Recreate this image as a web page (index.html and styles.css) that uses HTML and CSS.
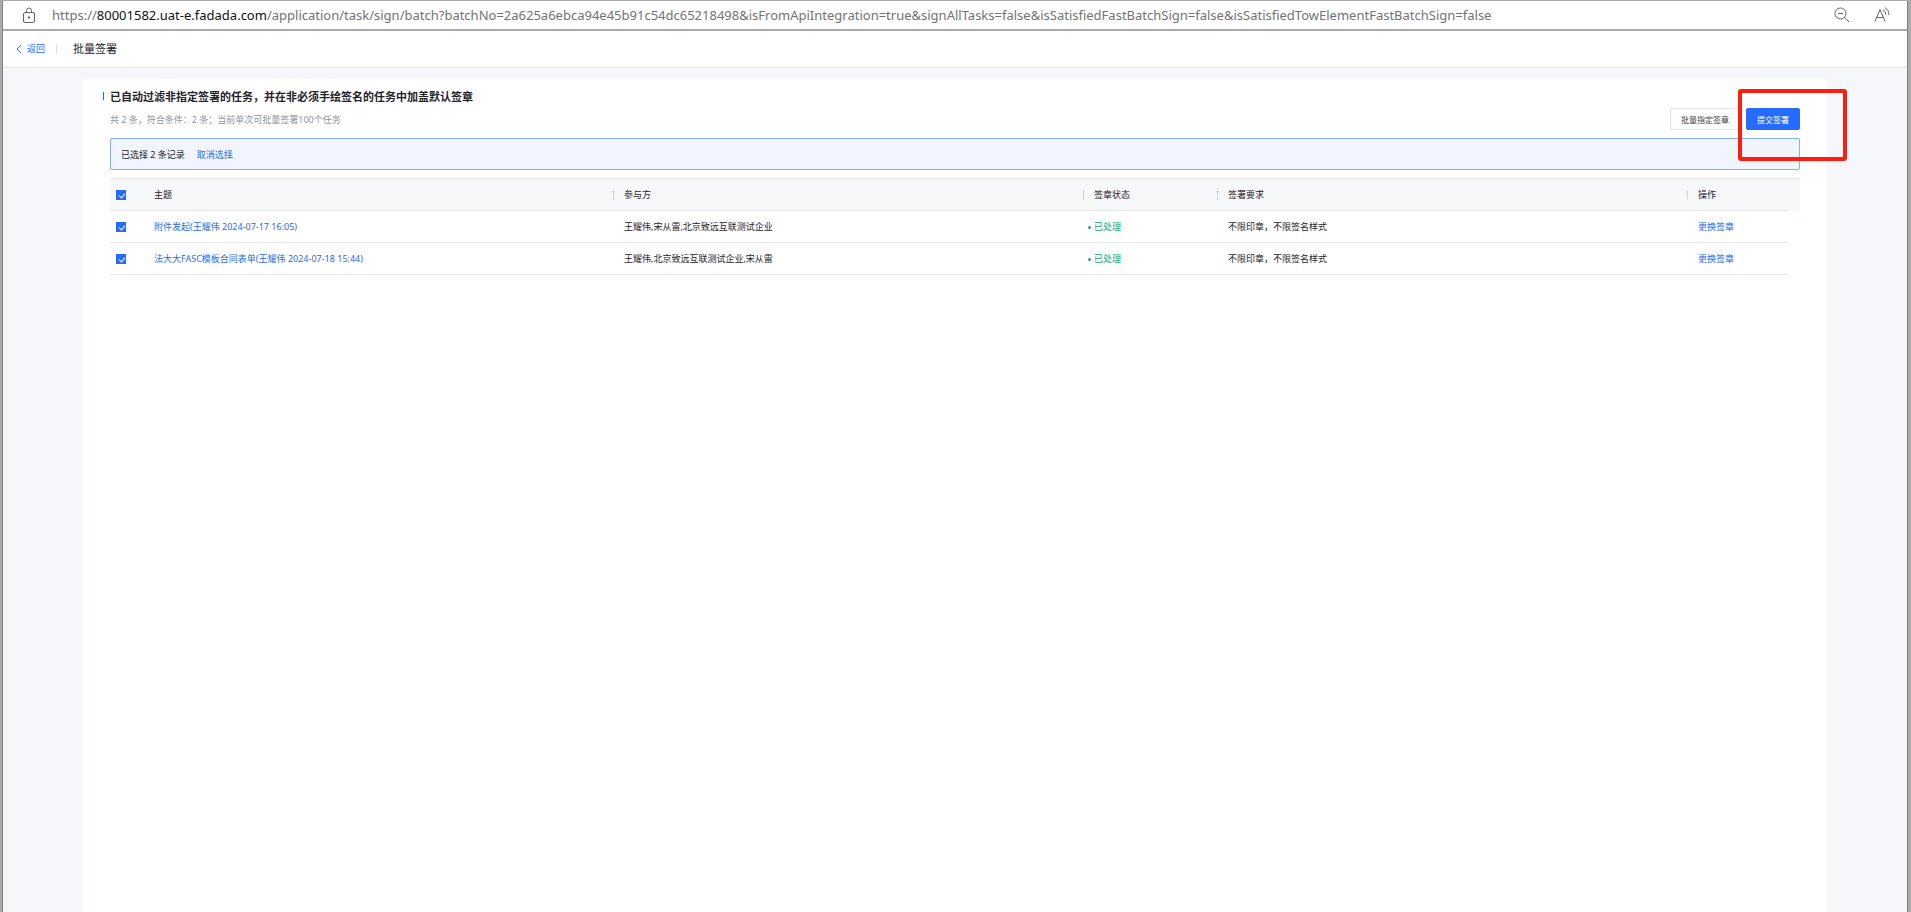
FILE: index.html
```html
<!DOCTYPE html>
<html lang="zh-CN">
<head>
  <meta charset="UTF-8">
  <meta name="viewport" content="width=device-width, initial-scale=1.0">
  <title>批量签署</title>
  <link rel="stylesheet" href="styles.css">
</head>
<body>
  <div class="window">
    <div class="address-bar">
      <svg class="icon-lock" width="14" height="17" viewBox="0 0 14 17" fill="none" stroke="#666">
        <rect x="1.5" y="5.5" width="11" height="10" rx="1.5"/>
        <path d="M4.5 5.5V3.5a2.5 2.5 0 0 1 5 0v2"/>
        <rect x="6.5" y="10" width="1" height="1"/>
      </svg>
      <div class="url">https://<span class="host">80001582.uat-e.fadada.com</span>/application/task/sign/batch?batchNo=2a625a6ebca94e45b91c54dc65218498&amp;isFromApiIntegration=true&amp;signAllTasks=false&amp;isSatisfiedFastBatchSign=false&amp;isSatisfiedTowElementFastBatchSign=false</div>
      <button type="button" class="tool" aria-label="缩小">
        <svg width="16" height="16" viewBox="0 0 16 16" fill="none" stroke="#666">
          <circle cx="6.5" cy="6.5" r="5.5"/>
          <path d="M4 6.5h5M10.4 10.4l4.6 4.6"/>
        </svg>
      </button>
      <button type="button" class="tool" aria-label="朗读">
        <svg width="16" height="16" viewBox="0 0 16 16" fill="none" stroke="#666">
          <path d="M1 14.5L6 2.5l5 12M2.8 10.5h6.4"/>
          <path d="M9 2.8q3 1.4 2.8 5M11 .8q4.2 2.2 3.8 7.2"/>
        </svg>
      </button>
    </div>

    <header class="page-header">
      <a href="#" class="back">
        <svg width="6" height="10" viewBox="0 0 6 10" fill="none" stroke="#256bff">
          <path d="M5 1L1 5l4 4"/>
        </svg>
        返回
      </a>
      <span class="divider"></span>
      <h1>批量签署</h1>
    </header>

    <main>
      <div class="card">
        <div class="card-head">
          <div>
            <h2>已自动过滤非指定签署的任务，并在非必须手绘签名的任务中加盖默认签章</h2>
            <p class="summary">共 2 条，符合条件：2 条；当前单次可批量签署100个任务</p>
          </div>
          <div class="actions">
            <button type="button" class="btn">批量指定签章</button>
            <div class="submit-wrap">
              <button type="button" class="btn btn-primary">提交签署</button>
              <span class="highlight"></span>
            </div>
          </div>
        </div>

        <div class="selected">
          <span>已选择 2 条记录</span>
          <a href="#">取消选择</a>
        </div>

        <table>
          <colgroup>
            <col class="col-check">
            <col>
            <col>
            <col class="col-status">
            <col>
            <col class="col-action">
            <col class="col-gutter">
          </colgroup>
          <thead>
            <tr>
              <th><input type="checkbox" aria-label="全选" checked></th>
              <th>主题</th>
              <th class="split">参与方</th>
              <th class="split">签章状态</th>
              <th class="split">签署要求</th>
              <th class="split">操作</th>
              <th class="gutter"></th>
            </tr>
          </thead>
          <tbody>
            <tr>
              <td><input type="checkbox" aria-label="附件发起" checked></td>
              <td><a href="#">附件发起(王耀伟 2024-07-17 16:05)</a></td>
              <td>王耀伟,宋从雷,北京致远互联测试企业</td>
              <td><span class="done">已处理</span></td>
              <td>不限印章，不限签名样式</td>
              <td><a href="#">更换签章</a></td>
            </tr>
            <tr>
              <td><input type="checkbox" aria-label="法大大FASC模板合同表单" checked></td>
              <td><a href="#">法大大FASC模板合同表单(王耀伟 2024-07-18 15:44)</a></td>
              <td>王耀伟,北京致远互联测试企业,宋从雷</td>
              <td><span class="done">已处理</span></td>
              <td>不限印章，不限签名样式</td>
              <td><a href="#">更换签章</a></td>
            </tr>
          </tbody>
        </table>
      </div>
    </main>
  </div>
</body>
</html>
```

FILE: styles.css
```css
* {
  box-sizing: border-box;
}

body {
  display: flex;
  min-height: 100vh;
  margin: 0;
  padding: 1px 3px 0 2px;
  background-color: #ababab;
  font-family: "Noto Sans", "Noto Sans CJK SC", sans-serif;
  font-size: 9px;
  line-height: 14px;
  color: #1f2329;
}

a {
  color: #256bff;
  text-decoration: none;
}

button {
  font-family: inherit;
  cursor: pointer;
}

.window {
  flex: 1;
  display: flex;
  flex-direction: column;
  min-width: 0;
  border-left: 1px solid #808080;
  border-right: 1px solid #808080;
  background-color: #f5f7fb;
}

/* Address bar */
.address-bar {
  display: flex;
  align-items: center;
  height: 30px;
  padding: 0 17px 0 19px;
  background-color: #fff;
  border-bottom: 2px solid #ababab;
}

.icon-lock {
  flex: none;
  margin-right: 16px;
}

.url {
  flex: 1;
  font-size: 13px;
  line-height: 20px;
  color: #737373;
  white-space: nowrap;
  overflow: hidden;
}

.host {
  color: #111;
}

.tool {
  display: flex;
  margin-left: 24px;
  padding: 0;
  border: none;
  background: none;
}

/* Page header */
.page-header {
  display: flex;
  align-items: center;
  height: 37px;
  padding: 0 13px;
  background-color: #fff;
  border-bottom: 1px solid #e5e6e8;
}

.back {
  display: flex;
  align-items: center;
  gap: 5px;
}

.divider {
  width: 1px;
  height: 10px;
  margin: 0 16px 0 11px;
  background-color: #dcdee2;
}

h1 {
  margin: 0;
  font-size: 11px;
  font-weight: 400;
}

/* Content */
main {
  flex: 1;
  display: flex;
  padding: 11px 80px 0;
}

.card {
  flex: 1;
  padding: 10px 27px;
  background-color: #fff;
}

.card-head {
  display: flex;
  justify-content: space-between;
  align-items: flex-end;
  margin-bottom: 8px;
}

h2 {
  position: relative;
  margin: 0 0 8px;
  font-size: 11px;
  line-height: 16px;
  font-weight: 700;
}

h2::before {
  content: "";
  position: absolute;
  left: -7px;
  top: 3px;
  width: 1px;
  height: 8px;
  background-color: #256bff;
}

.summary {
  margin: 0 0 3px;
  color: #8f959e;
}

.actions {
  display: flex;
  gap: 6px;
}

.btn {
  height: 22px;
  padding: 0 10px;
  border: 1px solid #e2e3e6;
  border-radius: 2px;
  background-color: #fff;
  font-size: 8px;
  color: #444;
}

.btn-primary {
  border-color: #256bff;
  background-color: #256bff;
  color: #fff;
}

.submit-wrap {
  position: relative;
}

/* Red frame drawn over the submit button */
.highlight {
  position: absolute;
  top: -19px;
  left: -8px;
  width: 109px;
  height: 72px;
  border: 4px solid #ff1d10;
  border-radius: 3px;
  pointer-events: none;
}

.selected {
  display: flex;
  align-items: center;
  gap: 12px;
  height: 32px;
  padding: 1px 10px 0;
  border: 1px solid #85aeff;
  border-radius: 2px;
  background-color: #f0f5ff;
}

/* Task table */
table {
  width: 100%;
  margin-top: 8px;
  table-layout: fixed;
  border-spacing: 0;
}

.col-check {
  width: 33px;
}

.col-status {
  width: 134px;
}

.col-action {
  width: 100px;
}

.col-gutter {
  width: 13px;
}

th,
td {
  height: 32px;
  padding: 0 11px;
  border-bottom: 1px solid #e5e6e8;
  text-align: left;
  font-weight: 400;
}

th {
  height: 33px;
  border-top: 1px solid #e5e6e8;
  background-color: #f7f8fa;
}

th:first-child,
td:first-child {
  padding: 0 6px;
}

.gutter {
  padding: 0;
  border-bottom-color: #f7f8fa;
}

.split {
  position: relative;
}

.split::before {
  content: "";
  position: absolute;
  left: 0;
  top: 12px;
  height: 8px;
  border-left: 1px dotted #b8bcc4;
}

input[type="checkbox"] {
  appearance: none;
  display: block;
  position: relative;
  width: 10px;
  height: 10px;
  margin: 0;
  border: 1px solid #c9cdd4;
}

input[type="checkbox"]:checked {
  border-color: #256bff;
  background-color: #256bff;
}

input[type="checkbox"]:checked::after {
  content: "";
  position: absolute;
  left: 3px;
  top: 1px;
  width: 3px;
  height: 5px;
  border: solid #fff;
  border-width: 0 1px 1px 0;
  transform: rotate(40deg);
}

.done {
  position: relative;
  color: #14a878;
}

.done::before {
  content: "";
  position: absolute;
  left: -6px;
  top: 6px;
  width: 3px;
  height: 3px;
  border-radius: 50%;
  background-color: #2f9e8f;
}
```
